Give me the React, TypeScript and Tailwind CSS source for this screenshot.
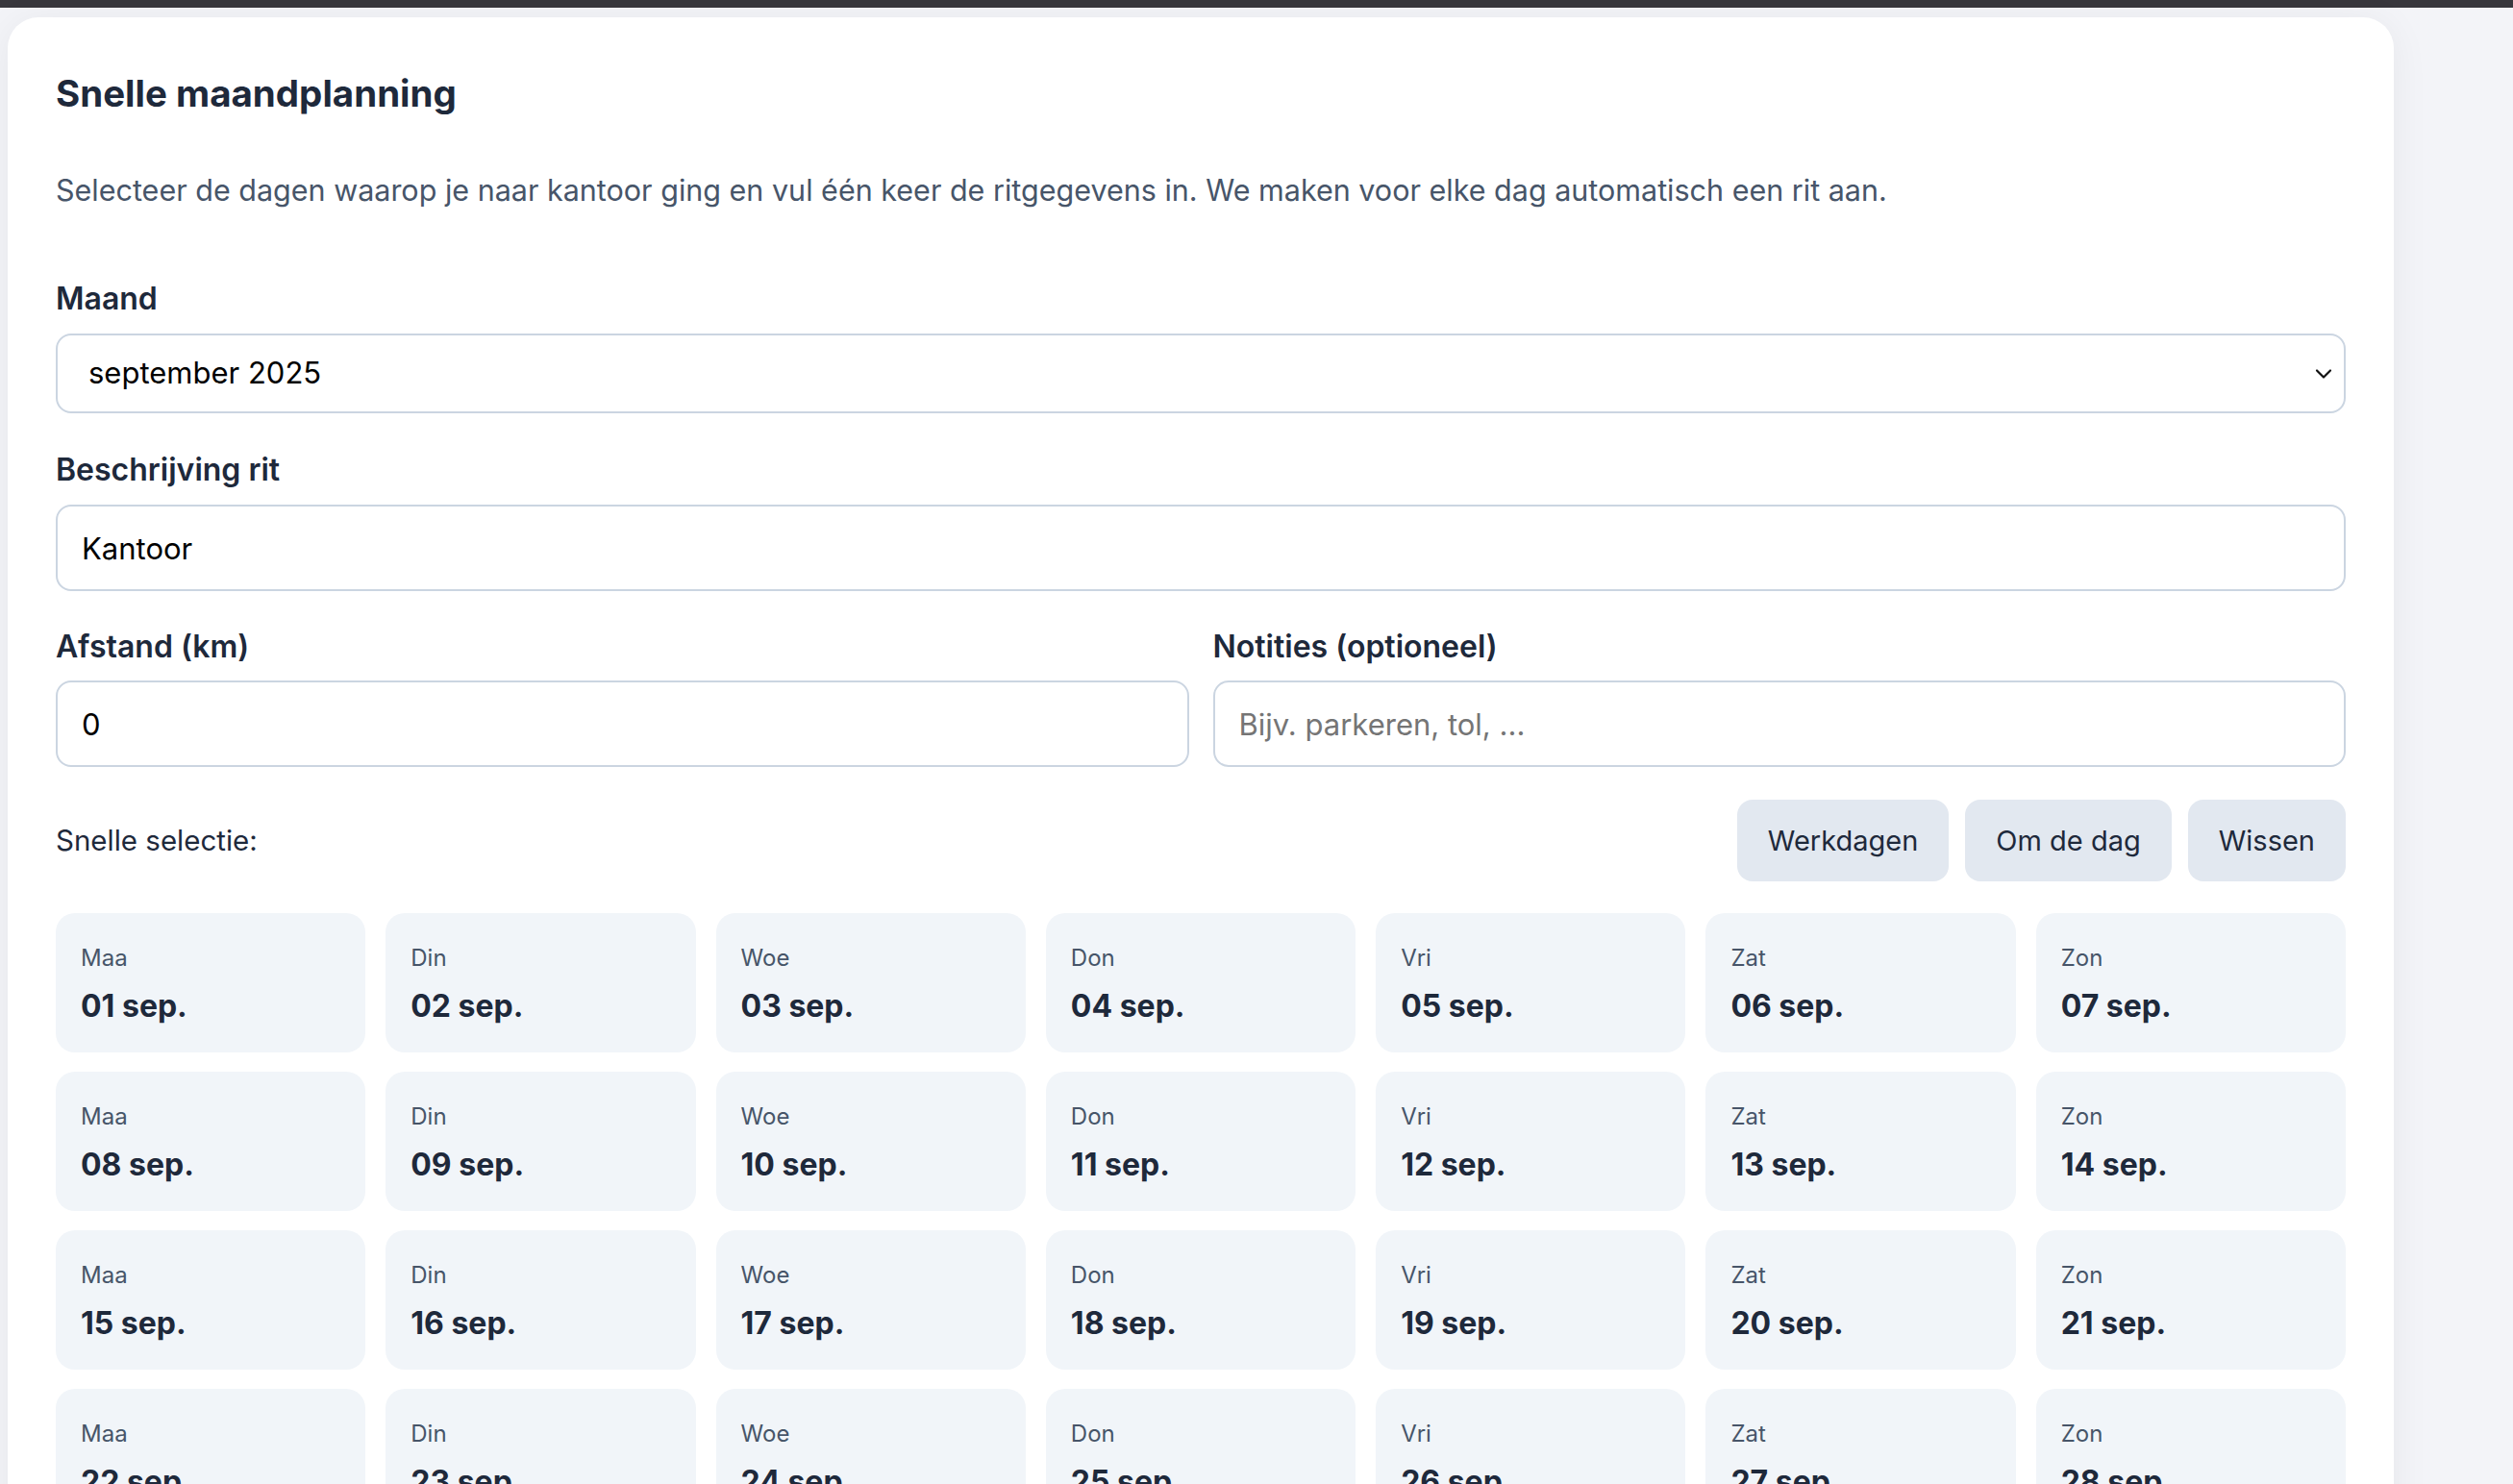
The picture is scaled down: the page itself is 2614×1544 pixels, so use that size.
import React from "react"

const weekdays = ["Maa", "Din", "Woe", "Don", "Vri", "Zat", "Zon"]
const days = Array.from({ length: 30 }, (_, i) => i + 1)

const font = { fontFamily: "Inter, 'Noto Sans', sans-serif" }

export default function App() {
    return (
        <div className="min-h-screen bg-[#f3f4f8]" style={font}>
            <div className="h-[8px] bg-[#38373c]" />
            <div className="flex pl-[8px] pt-[10px]">
                <div className="w-[2482px] rounded-t-[32px] bg-white px-[50px] pt-[51px] pb-[60px] shadow-[0_4px_40px_rgba(15,23,42,0.06)]">
                    <h1 className="text-[38.5px] leading-[56px] font-bold text-[#1e293b]">Snelle maandplanning</h1>
                    <p className="mt-[50px] text-[30.5px] leading-[46px] text-[#475569]">
                        Selecteer de dagen waarop je naar kantoor ging en vul één keer de ritgegevens in. We maken voor elke dag automatisch een rit aan.
                    </p>

                    <label className="mt-[67px] block text-[32px] leading-[45px] font-semibold text-[#1e293b]">Maand</label>
                    <div className="relative mt-[14px]">
                        <select
                            defaultValue="2025-09"
                            className="h-[83px] w-full appearance-none rounded-[16px] border-2 border-[#cbd5e1] bg-white pl-[32px] text-[31px] text-black outline-none"
                        >
                            <option value="2025-09">september 2025</option>
                        </select>
                        <svg className="pointer-events-none absolute right-[14px] top-[34px] h-[16px] w-[18px]" viewBox="0 0 18 16" fill="none">
                            <path d="M2 4.5l7 7 7-7" stroke="#111" strokeWidth="2.2" strokeLinecap="round" strokeLinejoin="round" />
                        </svg>
                    </div>

                    <label className="mt-[36px] block text-[32px] leading-[45px] font-semibold text-[#1e293b]">Beschrijving rit</label>
                    <input
                        defaultValue="Kantoor"
                        className="mt-[14px] block h-[90px] w-full rounded-[16px] border-2 border-[#cbd5e1] bg-white px-[25px] text-[31px] text-black outline-none"
                    />

                    <div className="mt-[35px] grid grid-cols-2 gap-x-[25px]">
                        <div>
                            <label className="block text-[32px] leading-[45px] font-semibold text-[#1e293b]">Afstand (km)</label>
                            <input
                                defaultValue="0"
                                className="mt-[13px] block h-[90px] w-full rounded-[16px] border-2 border-[#cbd5e1] bg-white px-[25px] text-[31px] text-black outline-none"
                            />
                        </div>
                        <div>
                            <label className="block text-[32px] leading-[45px] font-semibold text-[#1e293b]">Notities (optioneel)</label>
                            <input
                                placeholder="Bijv. parkeren, tol, ..."
                                className="mt-[13px] block h-[90px] w-full rounded-[16px] border-2 border-[#cbd5e1] bg-white px-[25px] text-[31px] text-black outline-none placeholder:text-[#757575]"
                            />
                        </div>
                    </div>

                    <div className="mt-[34px] flex items-center justify-between">
                        <span className="text-[29.5px] text-[#1e293b]">Snelle selectie:</span>
                        <div className="flex gap-[17px]">
                            {["Werkdagen", "Om de dag", "Wissen"].map(b => (
                                <button key={b} className="h-[85px] rounded-[16px] bg-[#e2e8f0] px-[32px] text-[29px] text-[#1e293b]">
                                    {b}
                                </button>
                            ))}
                        </div>
                    </div>

                    <div className="mt-[33px] grid grid-cols-7 gap-x-[21px] gap-y-[20px]">
                        {days.map((d, i) => (
                            <div key={d} className="flex flex-col gap-[8px] rounded-[20px] bg-[#f1f5f9] px-[26px] pt-[29px] pb-[24px]">
                                <span className="text-[24px] leading-[36px] text-[#475569]">{weekdays[i % 7]}</span>
                                <span className="text-[32px] leading-[48px] font-bold text-[#1e293b]">
                                    {String(d).padStart(2, "0")} sep.
                                </span>
                            </div>
                        ))}
                    </div>
                </div>
            </div>
        </div>
    )
}
